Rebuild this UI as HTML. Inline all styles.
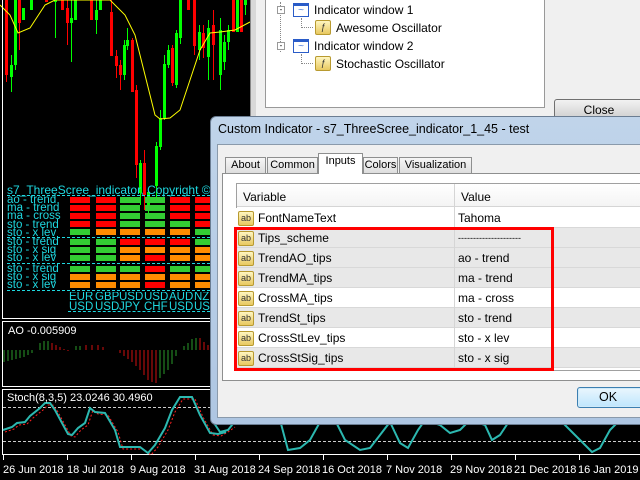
<!DOCTYPE html>
<html><head><meta charset="utf-8"><style>
*{margin:0;padding:0;box-sizing:border-box}
body{width:640px;height:480px;overflow:hidden;background:#000;position:relative;font-family:"Liberation Sans",sans-serif}
.a{position:absolute}
.t{font-size:12px;color:#000;white-space:nowrap}
.cy{color:#1fd8e0;font-size:11.5px;line-height:8.2px;white-space:nowrap;position:absolute}
.cu{color:#1fd8e0;font-size:11.5px;line-height:10px;position:absolute;top:292px;width:24px;overflow:hidden}
.c{position:absolute;width:20px;height:6px}
.R{background:#ff0000}.G{background:#33cc33}.O{background:#ff8c00}
.ab{position:absolute;width:16px;height:15px;background:linear-gradient(#fff6c0,#e8c860);border:1px solid #b89a30;border-radius:2px;font-size:9px;line-height:13px;color:#333;text-align:center}
.row{position:absolute;left:236px;width:404px;height:20px;border-bottom:1px solid #d8d8d8}
.tab{position:absolute;top:157px;height:17px;border:1px solid #8e8f8f;border-bottom:none;background:linear-gradient(#f6f6f6,#dcdcdc);font-size:11px;line-height:15px;text-align:center;color:#000;white-space:nowrap;overflow:hidden}
</style></head><body>
<svg class="a" style="left:0;top:0" width="640" height="480">
<g stroke-width="1">
<line x1="6.5" y1="0" x2="6.5" y2="82" stroke="#f00"/><rect x="5" y="0" width="3" height="75" fill="#f00"/>
<line x1="11.5" y1="55" x2="11.5" y2="92" stroke="#0f0"/><rect x="10" y="65" width="3" height="12" fill="#0f0"/>
<line x1="15.5" y1="0" x2="15.5" y2="70" stroke="#0f0"/><rect x="14" y="0" width="3" height="65" fill="#0f0"/>
<line x1="19.5" y1="0" x2="19.5" y2="50" stroke="#f00"/><rect x="18" y="0" width="3" height="23" fill="#f00"/>
<rect x="22" y="8" width="3" height="12" fill="#0f0"/>
<rect x="30" y="0" width="3" height="10" fill="#0f0"/>
<rect x="45" y="0" width="3" height="2" fill="#f00"/>
<line x1="55.5" y1="0" x2="55.5" y2="38" stroke="#0f0"/><rect x="54" y="0" width="3" height="2" fill="#0f0"/>
<rect x="61" y="0" width="3" height="10" fill="#f00"/>
<line x1="67.5" y1="0" x2="67.5" y2="45" stroke="#f00"/><rect x="66" y="8" width="3" height="15" fill="#f00"/>
<line x1="71.5" y1="0" x2="71.5" y2="62" stroke="#0f0"/><rect x="70" y="18" width="3" height="5" fill="#0f0"/>
<rect x="74" y="0" width="3" height="20" fill="#0f0"/>
<rect x="90" y="0" width="3" height="20" fill="#f00"/>
<line x1="96.5" y1="0" x2="96.5" y2="34" stroke="#0f0"/><rect x="95" y="10" width="3" height="10" fill="#0f0"/>
<rect x="99" y="0" width="3" height="10" fill="#0f0"/>
<line x1="111.5" y1="0" x2="111.5" y2="56" stroke="#f00"/><rect x="110" y="12" width="3" height="44" fill="#f00"/>
<line x1="116.5" y1="50" x2="116.5" y2="78" stroke="#f00"/><rect x="115" y="56" width="3" height="10" fill="#f00"/>
<line x1="120.5" y1="60" x2="120.5" y2="90" stroke="#f00"/><rect x="119" y="65" width="3" height="10" fill="#f00"/>
<line x1="124.5" y1="40" x2="124.5" y2="80" stroke="#0f0"/><rect x="123" y="45" width="3" height="30" fill="#0f0"/>
<line x1="127.5" y1="28" x2="127.5" y2="50" stroke="#0f0"/><rect x="126" y="40" width="3" height="6" fill="#0f0"/>
<line x1="132.5" y1="38" x2="132.5" y2="92" stroke="#f00"/><rect x="131" y="40" width="3" height="52" fill="#f00"/>
<line x1="136.5" y1="85" x2="136.5" y2="178" stroke="#f00"/><rect x="135" y="90" width="3" height="75" fill="#f00"/>
<line x1="140.5" y1="160" x2="140.5" y2="205" stroke="#0f0"/><rect x="139" y="163" width="3" height="30" fill="#0f0"/>
<line x1="144.5" y1="150" x2="144.5" y2="210" stroke="#f00"/><rect x="143" y="163" width="3" height="32" fill="#f00"/>
<line x1="148.5" y1="190" x2="148.5" y2="215" stroke="#0f0"/><rect x="147" y="192" width="3" height="18" fill="#0f0"/>
<line x1="156.5" y1="142" x2="156.5" y2="200" stroke="#0f0"/><rect x="155" y="146" width="3" height="40" fill="#0f0"/>
<line x1="160.5" y1="110" x2="160.5" y2="150" stroke="#0f0"/><rect x="159" y="118" width="3" height="29" fill="#0f0"/>
<line x1="164.5" y1="55" x2="164.5" y2="120" stroke="#0f0"/><rect x="163" y="64" width="3" height="54" fill="#0f0"/>
<line x1="168.5" y1="45" x2="168.5" y2="68" stroke="#0f0"/><rect x="167" y="50" width="3" height="15" fill="#0f0"/>
<line x1="172.5" y1="45" x2="172.5" y2="86" stroke="#f00"/><rect x="171" y="48" width="3" height="35" fill="#f00"/>
<line x1="176.5" y1="30" x2="176.5" y2="88" stroke="#0f0"/><rect x="175" y="33" width="3" height="52" fill="#0f0"/>
<line x1="180.5" y1="0" x2="180.5" y2="44" stroke="#0f0"/><rect x="179" y="0" width="3" height="38" fill="#0f0"/>
<rect x="187" y="0" width="3" height="10" fill="#f00"/>
<line x1="194.5" y1="0" x2="194.5" y2="55" stroke="#f00"/><rect x="193" y="0" width="3" height="46" fill="#f00"/>
<line x1="199.5" y1="25" x2="199.5" y2="60" stroke="#0f0"/><rect x="198" y="32" width="3" height="18" fill="#0f0"/>
<line x1="203.5" y1="25" x2="203.5" y2="58" stroke="#f00"/><rect x="202" y="33" width="3" height="15" fill="#f00"/>
<line x1="208.5" y1="20" x2="208.5" y2="80" stroke="#0f0"/><rect x="207" y="28" width="3" height="29" fill="#0f0"/>
<line x1="213.5" y1="10" x2="213.5" y2="80" stroke="#f00"/><rect x="212" y="25" width="3" height="20" fill="#f00"/>
<line x1="220.5" y1="18" x2="220.5" y2="90" stroke="#0f0"/><rect x="219" y="30" width="3" height="45" fill="#0f0"/>
<line x1="224.5" y1="35" x2="224.5" y2="70" stroke="#0f0"/><rect x="223" y="42" width="3" height="20" fill="#0f0"/>
<line x1="228.5" y1="25" x2="228.5" y2="50" stroke="#0f0"/><rect x="227" y="30" width="3" height="12" fill="#0f0"/>
<rect x="232" y="0" width="3" height="32" fill="#f00"/>
<rect x="236" y="0" width="3" height="32" fill="#0f0"/>
<rect x="240" y="0" width="3" height="32" fill="#f00"/>
<line x1="245.5" y1="0" x2="245.5" y2="15" stroke="#0f0"/><rect x="244" y="0" width="3" height="5" fill="#0f0"/>
</g>
<polyline fill="none" stroke="#ff0" stroke-width="1" points="0,5 10,15 18,33 30,28 45,5 55,0 110,0 125,15 135,35 145,75 155,115 160,119 170,118 180,110 190,80 200,50 210,33 220,32 235,30 250,22"/>
<rect x="2.5" y="-2" width="700" height="320.5" fill="none" stroke="#fff"/>
<rect x="2.5" y="321.5" width="700" height="65" fill="none" stroke="#fff"/>
<rect x="2.5" y="389.5" width="700" height="65" fill="none" stroke="#fff"/>
<g stroke-width="1">
<path d="M4 350V362M8 350V361M12 350V360M16 350V359M20 350V358M24 350V357M28 350V355M32 350V353M40 350V343M44 350V341M48 350V341" stroke="#2a9a2a"/>
<path d="M52 350V343M56 350V345M60 350V347M64 350V349M68 350V351" stroke="#d01010"/>
<path d="M76 350V346M80 350V346" stroke="#2a9a2a"/>
<path d="M86 350V345M92 350V345M98 350V345M103 350V347" stroke="#d01010"/>
<path d="M120 350V353M124 350V356M128 350V359M132 350V362M136 350V366M140 350V370M144 350V375M148 350V380M152 350V382M156 350V383" stroke="#d01010"/>
<path d="M160 350V378M164 350V374M168 350V370M172 350V364M176 350V356M184 350V346M188 350V343M192 350V339M196 350V338" stroke="#2a9a2a"/>
<path d="M200 350V338M204 350V342M208 350V345" stroke="#d01010"/>
</g>
<line x1="3" y1="407.5" x2="640" y2="407.5" stroke="#ccc" stroke-dasharray="3,2"/>
<line x1="3" y1="441.5" x2="640" y2="441.5" stroke="#ccc" stroke-dasharray="3,2"/>
<polyline fill="none" stroke="#ff2020" stroke-dasharray="2,2" points="5,432 14,429 19,425 27,424 33,418 43,410 48,405 53,405 58,412 65,425 71,436 75,437 81,430 88,425 93,410 98,414 108,415 118,432 123,449 133,449 143,449 151,455 158,447 168,430 175,412 183,399 195,399 203,417 213,435 221,436 228,432 235,427"/>
<polyline fill="none" stroke="#2cb8b0" stroke-width="2" points="3,430 12,427 17,423 25,422 30,416 40,408 45,403 50,403 55,410 62,423 68,434 72,435 78,428 85,423 90,408 95,412 105,413 115,430 120,447 130,447 140,447 148,453 155,445 165,428 172,410 180,397 192,397 200,415 210,433 218,434 226,432"/>
<polyline fill="none" stroke="#2cb8b0" stroke-width="2" points="212,420 220,432 228,430 240,415 260,412 280,420 288,450 300,448 310,440 320,422 335,420 345,440 360,450 370,448 380,435 390,422 400,443 408,448 418,430 425,420 440,425 450,433 460,430 470,420 485,425 492,440 500,435 510,420 540,420 560,420 580,440 592,452 600,448 610,430 620,420"/>
<g stroke="#fff"><path d="M3.5 455V460M67.5 455V460M131.5 455V460M195.5 455V460M259.5 455V460M323.5 455V460M387.5 455V460M451.5 455V460M515.5 455V460M579.5 455V460"/></g>
<g fill="#fff" font-size="11" font-family="Liberation Sans,sans-serif">
<text x="3" y="473">26 Jun 2018</text><text x="67" y="473">18 Jul 2018</text><text x="130" y="473">9 Aug 2018</text><text x="194" y="473">31 Aug 2018</text><text x="258" y="473">24 Sep 2018</text><text x="322" y="473">16 Oct 2018</text><text x="386" y="473">7 Nov 2018</text><text x="450" y="473">29 Nov 2018</text><text x="514" y="473">21 Dec 2018</text><text x="578" y="473">16 Jan 2019</text>
</g>
<text x="8" y="334" fill="#fff" font-size="11" font-family="Liberation Sans,sans-serif">AO -0.005909</text>
<text x="7" y="401" fill="#fff" font-size="11" font-family="Liberation Sans,sans-serif">Stoch(8,3,5) 23.0246 30.4960</text>
</svg>

<div class="cy" style="left:7px;top:184px;font-size:12px;line-height:12px">s7_ThreeScree_indicator, Copyright © 20</div>
<div class="a" style="left:7px;top:195px;width:203px;border-top:1px dashed #1fd8e0"></div>
<div class="cy" style="left:7px;top:196px">ao - trend<br>ma - trend<br>ma - cross<br>sto - trend<br>sto - x lev</div>
<div class="a" style="left:7px;top:237px;width:203px;border-top:1px dashed #1fd8e0"></div>
<div class="cy" style="left:7px;top:238px">sto - trend<br>sto - x sig<br>sto - x lev</div>
<div class="a" style="left:7px;top:263px;width:203px;border-top:1px dashed #1fd8e0"></div>
<div class="cy" style="left:7px;top:265px">sto - trend<br>sto - x sig<br>sto - x lev</div>
<div class="a" style="left:7px;top:290px;width:203px;border-top:1px dashed #1fd8e0"></div>
<div class="cu" style="left:69px">EUR<br>USD</div>
<div class="cu" style="left:95px">GBP<br>USD</div>
<div class="cu" style="left:119px">USD<br>JPY</div>
<div class="cu" style="left:144px">USD<br>CHF</div>
<div class="cu" style="left:169px">AUD<br>USD</div>
<div class="cu" style="left:194px;width:16px">NZD<br>USD</div>
<div class="a" style="left:68px;top:311px;width:142px;border-top:1px dashed #1fd8e0"></div>
<div id="cells"></div>
<script>
var rows=["RRGGRR","RRGGRR","RRGGRR","RRGGGR","GOOOOG","GGRRRG","GGOOOO","GGOROO","GGGRGG","OOOOOO","OOOROO"];
var ys=[197,205,213,221,229,239,247,255,266,274,282];
var xs=[70,96,120,145,170,195];var h="";
rows.forEach(function(r,i){for(var j=0;j<6;j++){var w=j==5?15:20;h+='<div class="c '+r[j]+'" style="left:'+xs[j]+'px;top:'+ys[i]+'px;width:'+w+'px"></div>';}});
document.getElementById("cells").innerHTML=h;
</script>

<div class="a" style="left:250px;top:0;width:390px;height:117px;background:#f0f0f0;border-left:1px solid #888"></div>
<div class="a" style="left:251px;top:0;width:5px;height:117px;background:#d8d8d8"></div>
<div class="a" style="left:265px;top:0;width:280px;height:108px;background:#fff;border:1px solid #999;border-top:none"></div>
<div class="a" style="left:280px;top:2px;height:50px;border-left:1px dotted #888"></div>
<div class="a" style="left:277px;top:6px;width:8px;height:8px;border:1px solid #999;background:#fff;font-size:8px;line-height:5px;text-align:center">-</div>
<div class="a" style="left:277px;top:42px;width:8px;height:8px;border:1px solid #999;background:#fff;font-size:8px;line-height:5px;text-align:center">-</div>
<div class="a" style="left:293px;top:3px;width:16px;height:14px;border:1px solid #2a5cc8;border-top:3px solid #2a5cc8;background:#fff;color:#4a7ad8;font-size:10px;line-height:9px;text-align:center">~</div>
<div class="a" style="left:293px;top:39px;width:16px;height:14px;border:1px solid #2a5cc8;border-top:3px solid #2a5cc8;background:#fff;color:#4a7ad8;font-size:10px;line-height:9px;text-align:center">~</div>
<div class="a t" style="left:314px;top:3px">Indicator window 1</div>
<div class="a t" style="left:314px;top:39px">Indicator window 2</div>
<div class="a" style="left:301px;top:18px;width:12px;height:10px;border-left:1px dotted #888;border-bottom:1px dotted #888"></div>
<div class="a" style="left:301px;top:54px;width:12px;height:10px;border-left:1px dotted #888;border-bottom:1px dotted #888"></div>
<div class="ab" style="left:315px;top:20px;font-style:italic">ƒ</div>
<div class="ab" style="left:315px;top:56px;font-style:italic">ƒ</div>
<div class="a t" style="left:336px;top:21px">Awesome Oscillator</div>
<div class="a t" style="left:336px;top:57px">Stochastic Oscillator</div>
<div class="a" style="left:554px;top:99px;width:90px;height:20px;border:1px solid #707070;border-radius:3px;background:linear-gradient(#f2f2f2,#d0d0d0);font-size:12px;text-align:center;line-height:20px">Close</div>

<div class="a" style="left:210px;top:116px;width:440px;height:309px;background:linear-gradient(#c0d4ea,#aec6e2);border:1px solid #6b7d92;border-radius:6px 0 0 6px"></div>
<div class="a t" style="left:218px;top:122px;font-size:12.5px">Custom Indicator - s7_ThreeScree_indicator_1_45 - test</div>
<div class="a" style="left:217px;top:144px;width:430px;height:274px;background:#f0f0f0;border:1px solid #8a9aab"></div>
<div class="tab" style="left:225px;width:41px">About</div>
<div class="tab" style="left:267px;width:51px">Common</div>
<div class="tab" style="left:363px;width:35px">Colors</div>
<div class="tab" style="left:399px;width:73px">Visualization</div>
<div class="a" style="left:222px;top:173px;width:420px;height:208px;background:#fff;border:1px solid #8e8f8f"></div>
<div class="tab" style="left:318px;top:153px;width:45px;height:21px;background:#fff;border-color:#8e8f8f">Inputs</div>
<div class="a" style="left:236px;top:183px;width:410px;height:188px;background:#fff;border:1px solid #a0a0a0"></div>
<div class="a" style="left:237px;top:184px;width:410px;height:23px;background:linear-gradient(#fff,#f4f4f4);border-bottom:1px solid #d5d5d5"></div>
<div class="a" style="left:454px;top:184px;height:185px;border-left:1px solid #d5d5d5"></div>
<div class="a t" style="left:243px;top:190px">Variable</div>
<div class="a t" style="left:461px;top:190px">Value</div>
<div id="rows"></div>
<script>
var d=[["FontNameText","Tahoma"],["Tips_scheme","---------------------"],["TrendAO_tips","ao - trend"],["TrendMA_tips","ma - trend"],["CrossMA_tips","ma - cross"],["TrendSt_tips","sto - trend"],["CrossStLev_tips","sto - x lev"],["CrossStSig_tips","sto - x sig"]];
var bg=["#fff","#e8e8e8","#e8e8e8","#e8e8e8","#fff","#e8e8e8","#fff","#e8e8e8"];var h="";
d.forEach(function(r,i){var y=208+i*20;h+='<div class="row" style="top:'+y+'px;background:'+bg[i]+'"></div><div class="ab" style="left:238px;top:'+(y+3)+'px">ab</div><div class="a t" style="left:258px;top:'+(y+3)+'px">'+r[0]+'</div><div class="a t" style="left:458px;top:'+(y+3)+'px;'+(i==1?'font-size:9px;top:'+(y+5)+'px':'')+'">'+r[1]+'</div>';});
document.getElementById("rows").innerHTML=h;
</script>
<div class="a" style="left:454px;top:208px;height:161px;border-left:1px solid #d5d5d5"></div>
<div class="a" style="left:234px;top:227px;width:320px;height:144px;border:3px solid #f00"></div>
<div class="a" style="left:577px;top:387px;width:70px;height:21px;border:1px solid #3c7fb1;border-radius:3px;background:linear-gradient(#eaf6fd,#bee6fd);box-shadow:inset 0 0 0 1px #cfeaf9;font-size:12.5px;text-align:center;line-height:19px;padding-right:8px">OK</div>
</body></html>
